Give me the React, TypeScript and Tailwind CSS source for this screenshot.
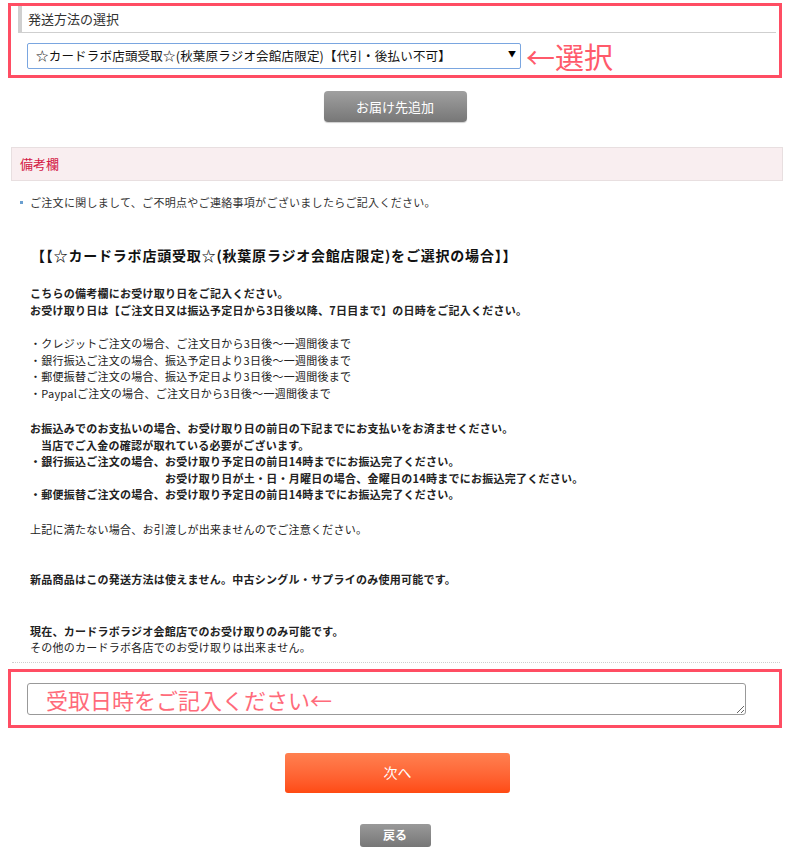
const font = "font-['Noto_Sans_CJK_JP','Noto_Sans',sans-serif]";

const Group = ({ className, children }: { className?: string; children: React.ReactNode }) => (
  <div className={"text-[11px] leading-[16.5px] tracking-[0.25px] text-[#222] " + (className ?? "")}>{children}</div>
);

export default function App() {
  return (
    <div className={`${font} w-[790px] min-h-[855px] bg-white flex flex-col`}>
      {/* 発送方法 */}
      <div className="mt-[3px] mx-[8px] border-[3px] border-[#ff4d63] pb-[7px]">
        <div className="ml-[7px] mr-[3px] h-[27px] border-l-4 border-b border-[#cfcfcf] flex items-center pl-[6px] text-[13px] text-[#333]">
          発送方法の選択
        </div>
        <div className="flex items-center mt-[9px] ml-[16px] h-[26px]">
          <div className="relative w-[494px] h-[26px]">
            <select className="appearance-none w-full h-full border border-[#7aa6e0] rounded-[2px] bg-white pl-[8px] text-[12.5px] tracking-[0.2px] text-[#111] outline-none">
              <option>☆カードラボ店頭受取☆(秋葉原ラジオ会館店限定)【代引・後払い不可】</option>
            </select>
            <span className="absolute right-[5px] top-[7px] text-[8px] leading-[10px] text-black pointer-events-none">▼</span>
          </div>
          <span className="ml-[5px] text-[29px] leading-[26px] text-[#ff5a6b] mt-[2px]">←選択</span>
        </div>
      </div>

      <div className="flex justify-center mt-[13px]">
        <button className="w-[143px] h-[31px] rounded-[4px] bg-gradient-to-b from-[#a0a0a0] to-[#777] text-white text-[13px] shadow-[0_1px_1px_rgba(0,0,0,0.2)]">
          お届け先追加
        </button>
      </div>

      {/* 備考欄 */}
      <div className="mt-[25px] ml-[11px] mr-[7px] h-[34px] bg-[#f9eef0] border border-[#e8dfe0] flex items-center pl-[8px] text-[13px] text-[#d31845]">
        備考欄
      </div>

      <div className="mt-[13px] ml-[20px] flex items-center text-[11px] leading-[16px] tracking-[0.3px] text-[#333]">
        <span className="w-[3px] h-[3px] bg-[#6a9fd0] mr-[7px]" />
        ご注文に関しまして、ご不明点やご連絡事項がございましたらご記入ください。
      </div>

      <div className="mt-[35px] ml-[31px] text-[14px] leading-[20px] tracking-[0.8px] font-bold text-[#111]">
        【【☆カードラボ店頭受取☆(秋葉原ラジオ会館店限定)をご選択の場合】】
      </div>

      <div className="ml-[30px]">
        <Group className="mt-[20px] font-bold">
          <p>こちらの備考欄にお受け取り日をご記入ください。</p>
          <p>お受け取り日は【ご注文日又は振込予定日から3日後以降、7日目まで】の日時をご記入ください。</p>
        </Group>
        <Group className="mt-[17px]">
          <p>・クレジットご注文の場合、ご注文日から3日後～一週間後まで</p>
          <p>・銀行振込ご注文の場合、振込予定日より3日後～一週間後まで</p>
          <p>・郵便振替ご注文の場合、振込予定日より3日後～一週間後まで</p>
          <p>・Paypalご注文の場合、ご注文日から3日後～一週間後まで</p>
        </Group>
        <Group className="mt-[19px] font-bold">
          <p>お振込みでのお支払いの場合、お受け取り日の前日の下記までにお支払いをお済ませください。</p>
          <p className="pl-[11px]">当店でご入金の確認が取れている必要がございます。</p>
          <p>・銀行振込ご注文の場合、お受け取り予定日の前日14時までにお振込完了ください。</p>
          <p className="pl-[135px]">お受け取り日が土・日・月曜日の場合、金曜日の14時までにお振込完了ください。</p>
          <p>・郵便振替ご注文の場合、お受け取り予定日の前日14時までにお振込完了ください。</p>
        </Group>
        <Group className="mt-[18px]">
          <p>上記に満たない場合、お引渡しが出来ませんのでご注意ください。</p>
        </Group>
        <Group className="mt-[34px] font-bold">
          <p>新品商品はこの発送方法は使えません。中古シングル・サプライのみ使用可能です。</p>
        </Group>
        <Group className="mt-[35px]">
          <p className="font-bold">現在、カードラボラジオ会館店でのお受け取りのみ可能です。</p>
          <p>その他のカードラボ各店でのお受け取りは出来ません。</p>
        </Group>
      </div>

      <div className="mt-[6px] ml-[12px] mr-[10px] border-t border-dotted border-[#cfcfcf]" />

      {/* 受取日時 */}
      <div className="mt-[6px] mx-[8px] border-[3px] border-[#ff4d63] pt-[11px] pb-[10px] pl-[16px]">
        <textarea
          placeholder="受取日時をご記入ください←"
          className="block w-[719px] h-[32px] border border-[#999] rounded-[3px] pl-[18px] pt-0 text-[22px] leading-[30px] placeholder:text-[#ff6b7a] outline-none"
        />
      </div>

      <div className="flex justify-center mt-[25px]">
        <button className="ml-[5px] w-[225px] h-[40px] rounded-[3px] bg-gradient-to-b from-[#ff8050] to-[#ff4a12] text-white text-[14px]">
          次へ
        </button>
      </div>

      <div className="flex justify-center mt-[31px]">
        <button className="w-[71px] h-[23px] rounded-[3px] bg-gradient-to-b from-[#999] to-[#777] text-white text-[12px] font-bold">
          戻る
        </button>
      </div>
    </div>
  );
}
